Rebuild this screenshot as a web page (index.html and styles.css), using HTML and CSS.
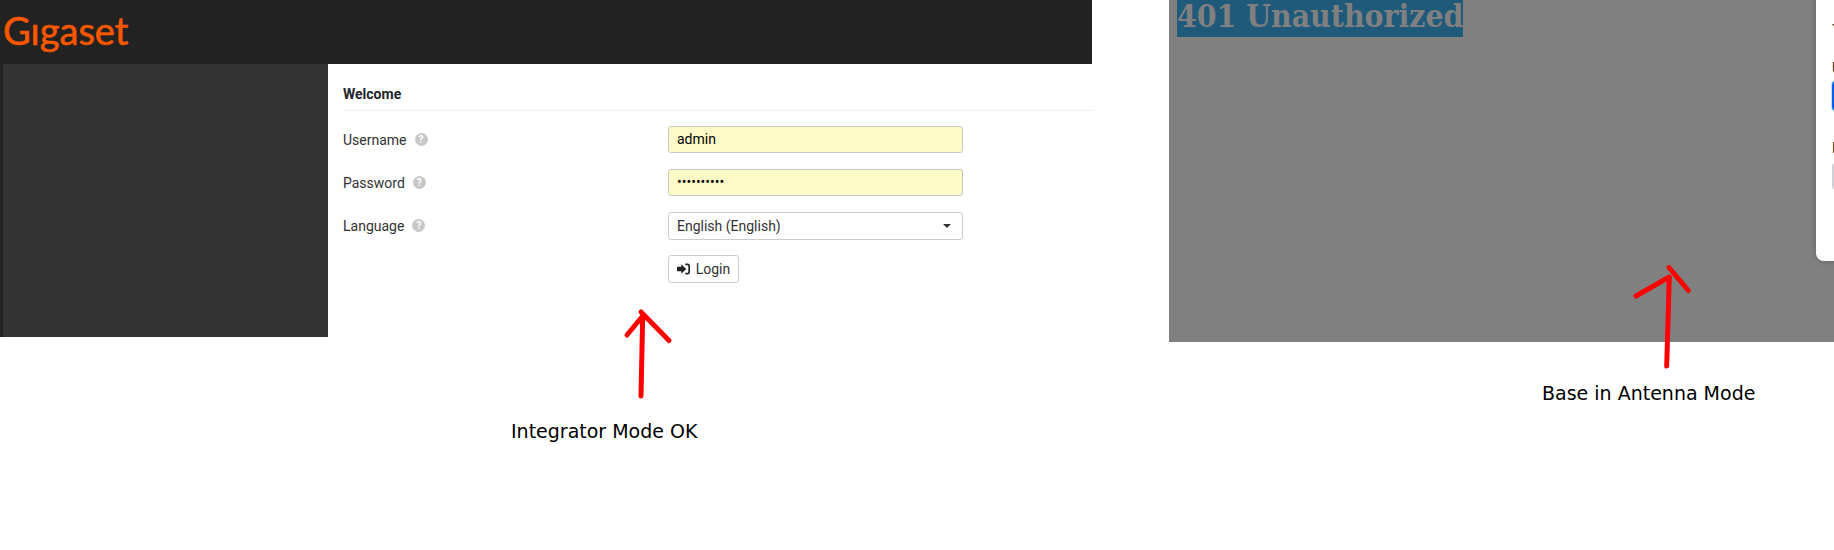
FILE: index.html
```html
<!DOCTYPE html>
<html lang="en">
<head>
<meta charset="utf-8">
<title>Integrator Mode vs Antenna Mode</title>
<link rel="stylesheet" href="styles.css">
</head>
<body>
<div class="stage">
  <section class="shot-left">
    <header class="topbar"><span class="logo">Gıgaset</span></header>
    <div class="shell">
      <aside class="sidebar"></aside>
      <main class="content">
        <h2 class="title">Welcome</h2>
        <form class="form">
          <div class="row">
            <label class="label">Username <span class="help">?</span></label>
            <input class="field filled" type="text" value="admin">
          </div>
          <div class="row">
            <label class="label">Password <span class="help">?</span></label>
            <input class="field filled" type="password" value="1234567890">
          </div>
          <div class="row">
            <label class="label">Language <span class="help">?</span></label>
            <div class="select">English (English)<span class="caret"></span></div>
          </div>
          <div class="row">
            <span class="label"></span>
            <button class="btn" type="button">
              <svg class="btn-icon" viewBox="0 0 14 12" width="13" height="12"><path fill="#222" d="M0 3.6h4.6V.8L10 6l-5.4 5.2V8.4H0z"/><path fill="none" stroke="#222" stroke-width="1.8" d="M9 1h2.2C12.4 1 13.1 1.7 13.1 2.8v6.4c0 1.1-.7 1.8-1.9 1.8H9"/></svg>
              Login
            </button>
          </div>
        </form>
      </main>
    </div>
  </section>

  <section class="shot-right">
    <h1 class="error"><span class="error-text">401 Unauthorized</span></h1>
    <div class="modal">
      <div class="modal-title">T</div>
      <div class="modal-label">U</div>
      <div class="modal-input focus"></div>
      <div class="modal-label second">P</div>
      <div class="modal-input plain"></div>
    </div>
  </section>

  <svg class="arrow arrow-left" width="60" height="100" viewBox="620 305 60 100"><path d="M641 396 L642.7 316 M627 335 L642.7 316 M641 312 L669 340.5"/></svg>
  <svg class="arrow arrow-right" width="70" height="115" viewBox="1630 260 70 115"><path d="M1666.7 366 L1669.3 277 L1636 296 M1669 267.5 L1688.3 290.5"/></svg>
  <p class="caption caption-left">Integrator Mode OK</p>
  <p class="caption caption-right">Base in Antenna Mode</p>
</div>
</body>
</html>
```
FILE: styles.css
```css
* { box-sizing: border-box; }
html, body { margin: 0; padding: 0; background: #fff; }
.stage {
  position: relative;
  width: 1834px;
  height: 550px;
  overflow: hidden;
  display: flex;
  justify-content: space-between;
  align-items: flex-start;
  font-family: Roboto, sans-serif;
  color: #212529;
}
.shot-left { width: 1092px; height: 337px; display: flex; flex-direction: column; }
.topbar { height: 64px; background: #222; flex: none; padding-left: 3px; }
.logo {
  display: block;
  font-family: Lato, sans-serif;
  font-size: 38px;
  line-height: 60px;
  font-weight: 400;
  -webkit-text-stroke: 0.6px #f95700;
  color: #f95700;
}
.shell { flex: 1; display: flex; background: #222; min-height: 0; }
.sidebar { width: 325px; margin-left: 3px; background: #333; }
.content { flex: 1; background: #fff; padding: 21px 0 0 15px; }
.title {
  margin: 0;
  height: 26px;
  font-size: 14px;
  line-height: 18px;
  font-weight: 700;
  border-bottom: 1px solid #eee;
}
.form { display: flex; flex-direction: column; gap: 16px; padding-top: 15px; }
.row { display: flex; align-items: center; height: 27px; }
.label { width: 325px; font-size: 14px; color: #333; display: flex; align-items: center; gap: 8px; }
.help {
  width: 13px;
  height: 13px;
  border-radius: 50%;
  background: #c8c8c8;
  color: #fff;
  font-size: 10px;
  font-weight: 700;
  line-height: 13px;
  text-align: center;
}
.field, .select {
  width: 295px;
  height: 27px;
  border: 1px solid #ccc;
  border-radius: 3px;
  padding: 0 8px;
  font: 14px Roboto, sans-serif;
  color: #212529;
  outline: none;
}
.filled { background: #fffbc8; border-color: #c9c9c0; color: #000; padding-bottom: 2px; }
.select { background: #fff; display: flex; align-items: center; justify-content: space-between; height: 28px; color: #333; }
.caret { width: 0; height: 0; border: 4px solid transparent; border-top-color: #333; border-bottom: 0; margin-right: 3px; }
.btn {
  height: 28px;
  width: 71px;
  background: #fff;
  border: 1px solid #ccc;
  border-radius: 3px;
  padding: 0;
  font: 14px Roboto, sans-serif;
  color: #333;
  display: flex;
  align-items: center;
  justify-content: center;
  gap: 6px;
}
.shot-right { position: relative; width: 665px; height: 342px; background: #808080; overflow: hidden; }
.error {
  margin: 0;
  padding-left: 8px;
  font-family: "DejaVu Serif", serif;
  font-stretch: condensed;
  font-size: 31.6px;
  line-height: 31px;
  font-weight: 700;
}
.error-text { display: block; width: fit-content; background: #1f5a7a; color: #808080; height: 37px; }
.modal {
  position: absolute;
  left: 647px;
  top: -10px;
  width: 300px;
  height: 271px;
  background: #fff;
  border-radius: 8px;
  box-shadow: 0 0 6px rgba(0,0,0,.25);
  padding: 31px 0 0 16px;
  font: 14px Roboto, sans-serif;
  color: #333;
}
.modal-title { font-size: 18px; line-height: 20px; }
.modal-label { margin-top: 18px; line-height: 18px; }
.modal-label.second { margin-top: 28px; }
.modal-input { width: 200px; height: 27px; border: 1px solid #ccc; border-radius: 4px; margin-top: 6px; }
.modal-input.focus { height: 30px; margin-top: 4px; border: 2px solid #0a5fe8; box-shadow: 0 0 0 1px rgba(13,110,253,.25); }
.modal-input.plain { border-width: 2px; border-color: #cfcfd6; }
.arrow { position: absolute; fill: none; stroke: #f00; stroke-width: 5; stroke-linecap: round; stroke-linejoin: round; }
.arrow-left { left: 620px; top: 305px; }
.arrow-right { left: 1630px; top: 260px; }
.caption { position: absolute; margin: 0; font-family: "DejaVu Sans", sans-serif; font-size: 19px; line-height: 22px; color: #000; }
.caption-left { left: 511px; top: 420px; }
.caption-right { left: 1542px; top: 382px; }
```
